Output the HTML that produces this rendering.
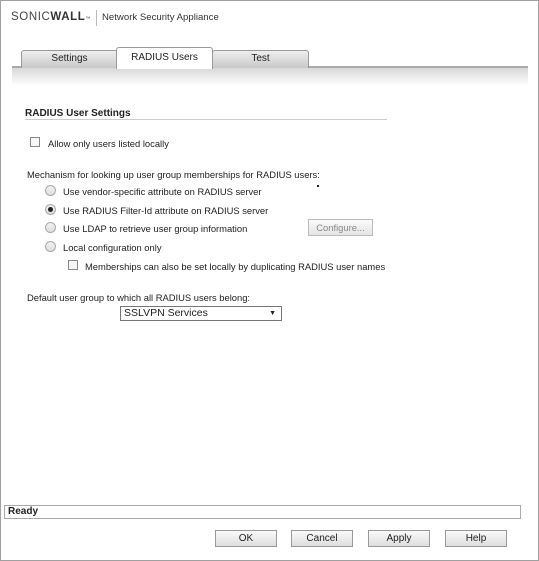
<!DOCTYPE html><html><head><style>
body{margin:0;width:539px;height:561px;position:relative;background:#fff;font-family:"Liberation Sans",sans-serif;font-size:9.4px;color:#222;overflow:hidden}
.a{position:absolute;white-space:nowrap}
.frame{position:absolute;left:0;top:0;width:537px;height:559px;border:1px solid #a0a0a0}
.tab{position:absolute;top:50px;height:17px;border:1px solid #999;border-bottom:none;border-radius:3px 3px 0 0;background:linear-gradient(#eee,#c8c8c8);text-align:center;line-height:16px;font-size:10px}
.rad{position:absolute;width:9px;height:9px;border:1px solid #aaa;border-radius:50%;background:linear-gradient(#f2f2f2,#ddd)}
.chk{position:absolute;width:8px;height:8px;border:1px solid #888;background:#f6f6f6}
.btn{position:absolute;top:530px;width:60px;height:15px;border:1px solid #999;background:linear-gradient(#fafafa,#ddd);text-align:center;line-height:15px;font-size:10px}
</style></head><body>
<div class="frame"></div>
<div class="a" style="left:11px;top:11px;font-size:11.5px;letter-spacing:0.6px;color:#444">SONIC<b style="color:#333">WALL</b><span style="font-size:5px">™</span></div>
<div class="a" style="left:96px;top:10px;width:1px;height:16px;background:#bbb"></div>
<div class="a" style="left:102px;top:12px;font-size:9.6px;color:#333">Network Security Appliance</div>
<div class="a" style="left:12px;top:66px;width:516px;height:20px;background:linear-gradient(#d4d4d4,#fff)"></div>
<div class="a" style="left:12px;top:66px;width:516px;height:2px;background:#aaa"></div>
<div class="tab" style="left:21px;width:95px">Settings</div>
<div class="tab" style="left:116px;top:47px;width:95px;height:21px;background:#fff;line-height:20px">RADIUS Users</div>
<div class="tab" style="left:212px;width:95px">Test</div>
<div class="a" style="left:25px;top:108px;font-weight:bold;font-size:10px">RADIUS User Settings</div>
<div class="a" style="left:25px;top:119px;width:362px;height:1px;background:#ccc"></div>
<div class="chk" style="left:30px;top:137px"></div>
<div class="a" style="left:48px;top:138px">Allow only users listed locally</div>
<div class="a" style="left:27px;top:169px">Mechanism for looking up user group memberships for RADIUS users:</div>
<div class="rad" style="left:45px;top:185px"></div><div class="a" style="left:63px;top:186px">Use vendor-specific attribute on RADIUS server</div>
<div class="a" style="left:317px;top:185px;width:2px;height:2px;background:#222"></div>
<div class="rad" style="left:45px;top:204px"></div><div class="a" style="left:48px;top:207px;width:5px;height:5px;border-radius:50%;background:#222"></div><div class="a" style="left:63px;top:205px">Use RADIUS Filter-Id attribute on RADIUS server</div>
<div class="rad" style="left:45px;top:222px"></div><div class="a" style="left:63px;top:223px">Use LDAP to retrieve user group information</div>
<div class="a" style="left:308px;top:219px;width:63px;height:15px;border:1px solid #bbb;background:linear-gradient(#fafafa,#e4e4e4);color:#888;text-align:center;line-height:15px">Configure...</div>
<div class="rad" style="left:45px;top:241px"></div><div class="a" style="left:63px;top:242px">Local configuration only</div>
<div class="chk" style="left:68px;top:260px"></div><div class="a" style="left:85px;top:261px">Memberships can also be set locally by duplicating RADIUS user names</div>
<div class="a" style="left:27px;top:292px">Default user group to which all RADIUS users belong:</div>
<div class="a" style="left:120px;top:306px;width:157px;height:13px;border:1px solid #777;font-size:10.5px;line-height:13px;padding-left:3px">SSLVPN Services<span style="position:absolute;right:5px;font-size:7px">▼</span></div>
<div class="a" style="left:4px;top:505px;width:512px;height:12px;border:1px solid #aaa;font-weight:bold;font-size:10px;line-height:12px;padding-left:3px">Ready</div>
<div class="btn" style="left:215px">OK</div>
<div class="btn" style="left:291px">Cancel</div>
<div class="btn" style="left:368px">Apply</div>
<div class="btn" style="left:445px">Help</div>
</body></html>
